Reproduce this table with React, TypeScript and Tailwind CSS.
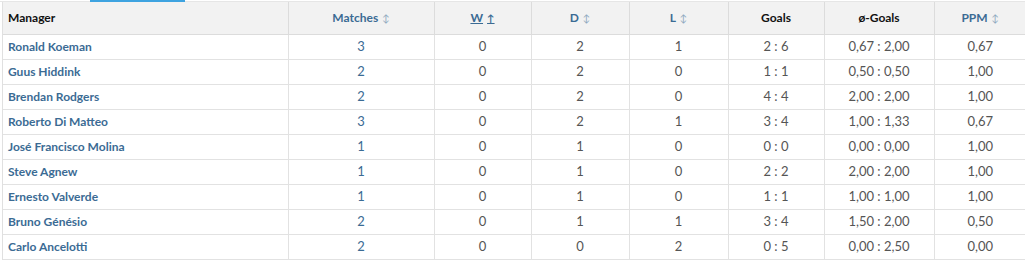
import React from 'react';

type Row = {
  name: string;
  matches: number;
  w: number;
  d: number;
  l: number;
  goals: string;
  avg: string;
  ppm: string;
};

const ROWS: Row[] = [
  { name: 'Ronald Koeman', matches: 3, w: 0, d: 2, l: 1, goals: '2 : 6', avg: '0,67 : 2,00', ppm: '0,67' },
  { name: 'Guus Hiddink', matches: 2, w: 0, d: 2, l: 0, goals: '1 : 1', avg: '0,50 : 0,50', ppm: '1,00' },
  { name: 'Brendan Rodgers', matches: 2, w: 0, d: 2, l: 0, goals: '4 : 4', avg: '2,00 : 2,00', ppm: '1,00' },
  { name: 'Roberto Di Matteo', matches: 3, w: 0, d: 2, l: 1, goals: '3 : 4', avg: '1,00 : 1,33', ppm: '0,67' },
  { name: 'José Francisco Molina', matches: 1, w: 0, d: 1, l: 0, goals: '0 : 0', avg: '0,00 : 0,00', ppm: '1,00' },
  { name: 'Steve Agnew', matches: 1, w: 0, d: 1, l: 0, goals: '2 : 2', avg: '2,00 : 2,00', ppm: '1,00' },
  { name: 'Ernesto Valverde', matches: 1, w: 0, d: 1, l: 0, goals: '1 : 1', avg: '1,00 : 1,00', ppm: '1,00' },
  { name: 'Bruno Génésio', matches: 2, w: 0, d: 1, l: 1, goals: '3 : 4', avg: '1,50 : 2,00', ppm: '0,50' },
  { name: 'Carlo Ancelotti', matches: 2, w: 0, d: 0, l: 2, goals: '0 : 5', avg: '0,00 : 2,50', ppm: '0,00' },
];

function Sort() {
  return <span className="ml-1 text-[10px] font-normal text-[#8fa9bf]">↕</span>;
}

const th = 'border-r border-[#dcdcdc] font-bold h-[32px] text-center';
const td = 'border-r border-[#e2e2e2] pt-px text-center text-[13px] text-[#555]';

export default function App() {
  return (
    <div className="h-[260px] w-[1025px] overflow-hidden bg-white font-['Source_Sans_Pro','Lato','Liberation_Sans',sans-serif] text-[12px]">
      <div className="h-[2px] border-b border-[#e6e6e6] pl-[90px]">
        <div className="h-[2px] w-[95px] bg-[#3ea3e0]" />
      </div>
      <div className="ml-[2px] border-l border-[#e0e0e0]">
        <table className="w-[1023px] table-fixed border-collapse">
          <colgroup>
            <col className="w-[285px]" />
            <col className="w-[146px]" />
            <col className="w-[97px]" />
            <col className="w-[98px]" />
            <col className="w-[99px]" />
            <col className="w-[96px]" />
            <col className="w-[110px]" />
            <col className="w-[92px]" />
          </colgroup>
          <thead>
            <tr className="bg-[#f2f2f2] border-b border-[#dcdcdc]">
              <th className={`${th} pl-[5px] text-left text-[#111]`}>Manager</th>
              <th className={`${th} text-[#3b6b94]`}>
                Matches
                <Sort />
              </th>
              <th className={`${th} text-[#3b6b94]`}>
                <span className="underline">W</span>
                <span className="ml-1 text-[10px] underline">↑</span>
              </th>
              <th className={`${th} text-[#3b6b94]`}>
                D
                <Sort />
              </th>
              <th className={`${th} text-[#3b6b94]`}>
                L
                <Sort />
              </th>
              <th className={`${th} text-[#111]`}>Goals</th>
              <th className={`${th} text-[#111]`}>ø-Goals</th>
              <th className="h-[32px] text-center font-bold text-[#3b6b94]">
                PPM
                <Sort />
              </th>
            </tr>
          </thead>
          <tbody>
            {ROWS.map((r) => (
              <tr key={r.name} className="h-[25px] border-b border-[#e2e2e2]">
                <td className="border-r border-[#e2e2e2] pl-[5px] pt-px font-bold text-[#3b6b94]">{r.name}</td>
                <td className="border-r border-[#e2e2e2] pt-px text-center text-[13px] text-[#3b6b94]">{r.matches}</td>
                <td className={td}>{r.w}</td>
                <td className={td}>{r.d}</td>
                <td className={td}>{r.l}</td>
                <td className={td}>{r.goals}</td>
                <td className={td}>{r.avg}</td>
                <td className="pt-px text-center text-[13px] text-[#555]">{r.ppm}</td>
              </tr>
            ))}
          </tbody>
        </table>
      </div>
    </div>
  );
}
